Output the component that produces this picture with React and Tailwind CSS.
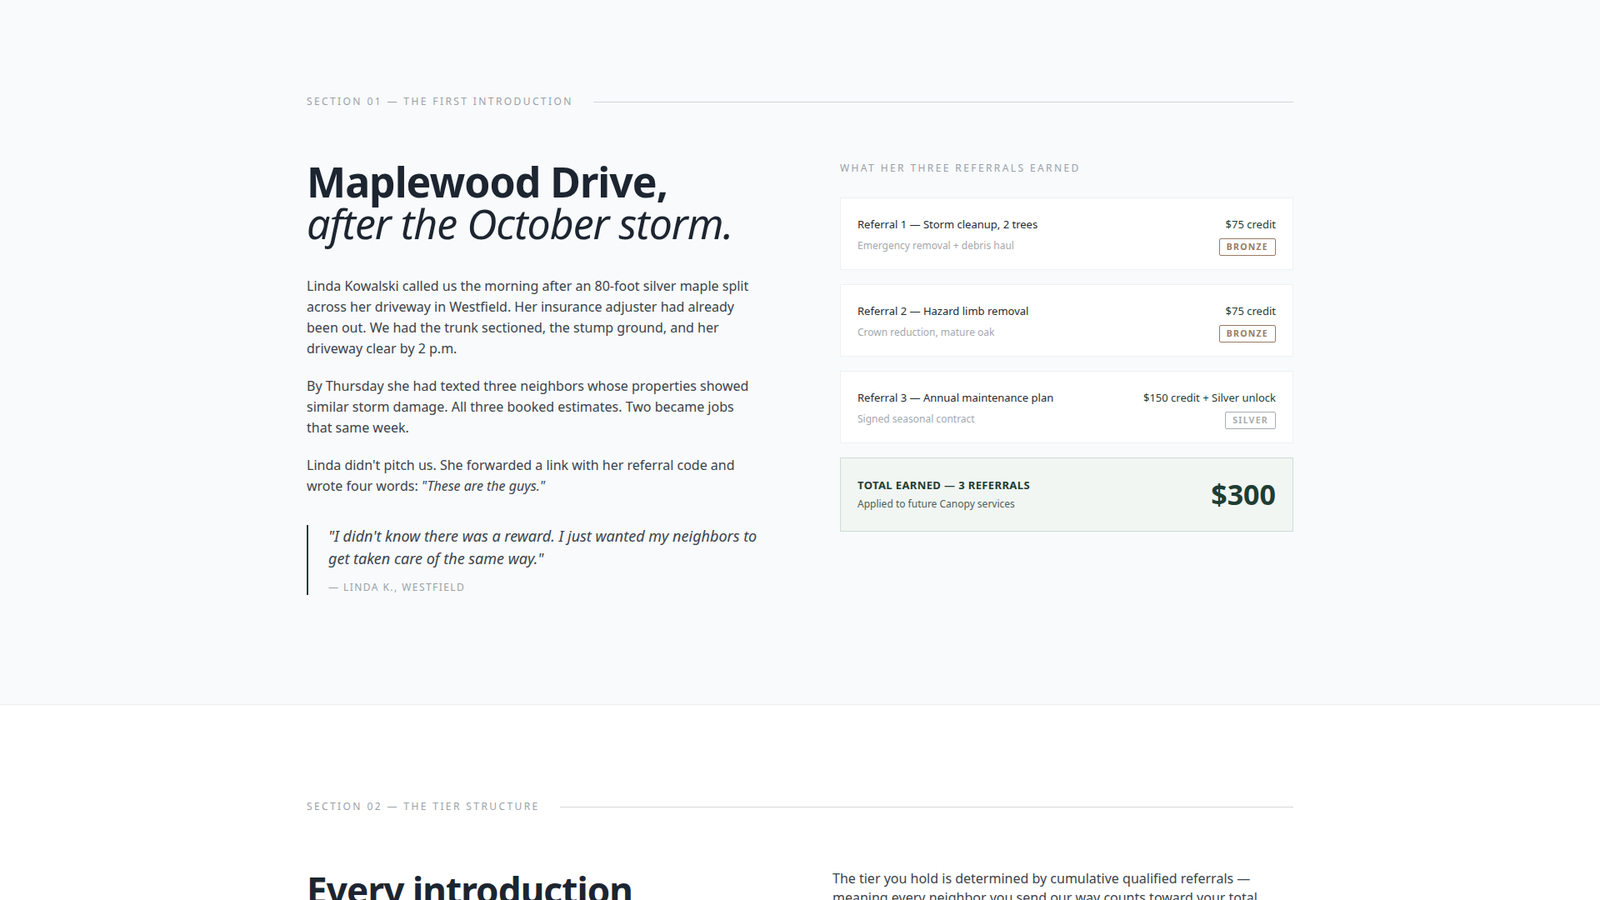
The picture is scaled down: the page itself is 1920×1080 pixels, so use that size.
const referrals = [
  { title: "Referral 1 — Storm cleanup, 2 trees", sub: "Emergency removal + debris haul", credit: "$75 credit", tier: "BRONZE" },
  { title: "Referral 2 — Hazard limb removal", sub: "Crown reduction, mature oak", credit: "$75 credit", tier: "BRONZE" },
  { title: "Referral 3 — Annual maintenance plan", sub: "Signed seasonal contract", credit: "$150 credit + Silver unlock", tier: "SILVER" },
];

const serif = "font-[family-name:'Liberation_Serif',serif]";
const sans = "font-[family-name:'Liberation_Sans',Arial,sans-serif]";

const Label = ({ children }) => (
  <div className="flex items-center gap-6">
    <p className={`${serif} text-[12px] tracking-[0.2em] text-[#9aa1a8] whitespace-nowrap`}>{children}</p>
    <div className="h-px flex-1 bg-[#d3d7db]" />
  </div>
);

const App = () => {
  return (
    <div className={`${sans} bg-white min-h-screen`}>
      <section className="bg-[#f8fafb] border-b border-[#eceff1] h-[846px] pt-[113px]">
        <div className="w-[1184px] mx-auto">
          <Label>SECTION 01 — THE FIRST INTRODUCTION</Label>
          <div className="flex justify-between mt-[62px]">
            <div className="w-[545px]">
              <h1 className={`${serif} text-[50px] leading-[50px] text-[#1c2530] tracking-[-0.02em]`}>
                <span className="font-bold">Maplewood Drive,</span>
                <br />
                <span className="italic">after the October storm.</span>
              </h1>
              <div className="mt-[38px] text-[16px] leading-[25px] text-[#3b434b] space-y-[20px]">
                <p>Linda Kowalski called us the morning after an 80-foot silver maple split across her driveway in Westfield. Her insurance adjuster had already been out. We had the trunk sectioned, the stump ground, and her driveway clear by 2 p.m.</p>
                <p>By Thursday she had texted three neighbors whose properties showed similar storm damage. All three booked estimates. Two became jobs that same week.</p>
                <p>Linda didn't pitch us. She forwarded a link with her referral code and wrote four words: <em>"These are the guys."</em></p>
              </div>
              <blockquote className="mt-[34px] border-l-2 border-[#1f3d33] pl-[24px]">
                <p className={`${serif} italic text-[18px] leading-[27px] text-[#3b434b]`}>"I didn't know there was a reward. I just wanted my neighbors to get taken care of the same way."</p>
                <p className="mt-[12px] text-[12px] tracking-[0.12em] text-[#9aa1a8]">— LINDA K., WESTFIELD</p>
              </blockquote>
            </div>
            <div className="w-[544px]">
              <p className={`${serif} text-[12px] tracking-[0.2em] text-[#9aa1a8]`}>WHAT HER THREE REFERRALS EARNED</p>
              <div className="mt-[26px] space-y-[17px]">
                {referrals.map((r) => (
                  <div key={r.title} className="bg-white border border-[#eef0f2] h-[87px] px-[20px] pt-[22px] flex justify-between">
                    <div>
                      <p className="text-[13px] text-[#1f2a33]">{r.title}</p>
                      <p className="mt-[6px] text-[12px] text-[#a3a9ae]">{r.sub}</p>
                    </div>
                    <div className="flex flex-col items-end">
                      <p className="text-[13px] text-[#1f3d33]">{r.credit}</p>
                      <span className={`mt-[6px] border px-[8px] py-[2px] text-[10.5px] font-bold tracking-[0.12em] rounded-[2px] ${r.tier === "SILVER" ? "border-[#a7adb2] text-[#a7adb2]" : "border-[#9a7a62] text-[#9a7a62]"}`}>{r.tier}</span>
                    </div>
                  </div>
                ))}
                <div className="bg-[#f1f6f3] border border-[#cfdcd5] h-[89px] px-[20px] flex items-center justify-between">
                  <div>
                    <p className="text-[13px] font-bold tracking-[0.03em] text-[#1f3d33]">TOTAL EARNED — 3 REFERRALS</p>
                    <p className="mt-[4px] text-[12px] text-[#4f5e57]">Applied to future Canopy services</p>
                  </div>
                  <p className={`${serif} font-bold text-[34px] text-[#1f3d33]`}>$300</p>
                </div>
              </div>
            </div>
          </div>
        </div>
      </section>
      <section className="bg-white pt-[113px] pb-[80px]">
        <div className="w-[1184px] mx-auto">
          <Label>SECTION 02 — THE TIER STRUCTURE</Label>
          <div className="flex justify-between mt-[66px]">
            <h2 className={`${serif} font-bold text-[44px] leading-[50px] text-[#1c2530] tracking-[-0.02em]`}>Every introduction</h2>
            <p className="w-[553px] text-[16px] leading-[23px] text-[#3b434b]">The tier you hold is determined by cumulative qualified referrals — meaning every neighbor you send our way counts toward your total, regardless of when they booked.</p>
          </div>
        </div>
      </section>
    </div>
  );
};

export default App;
